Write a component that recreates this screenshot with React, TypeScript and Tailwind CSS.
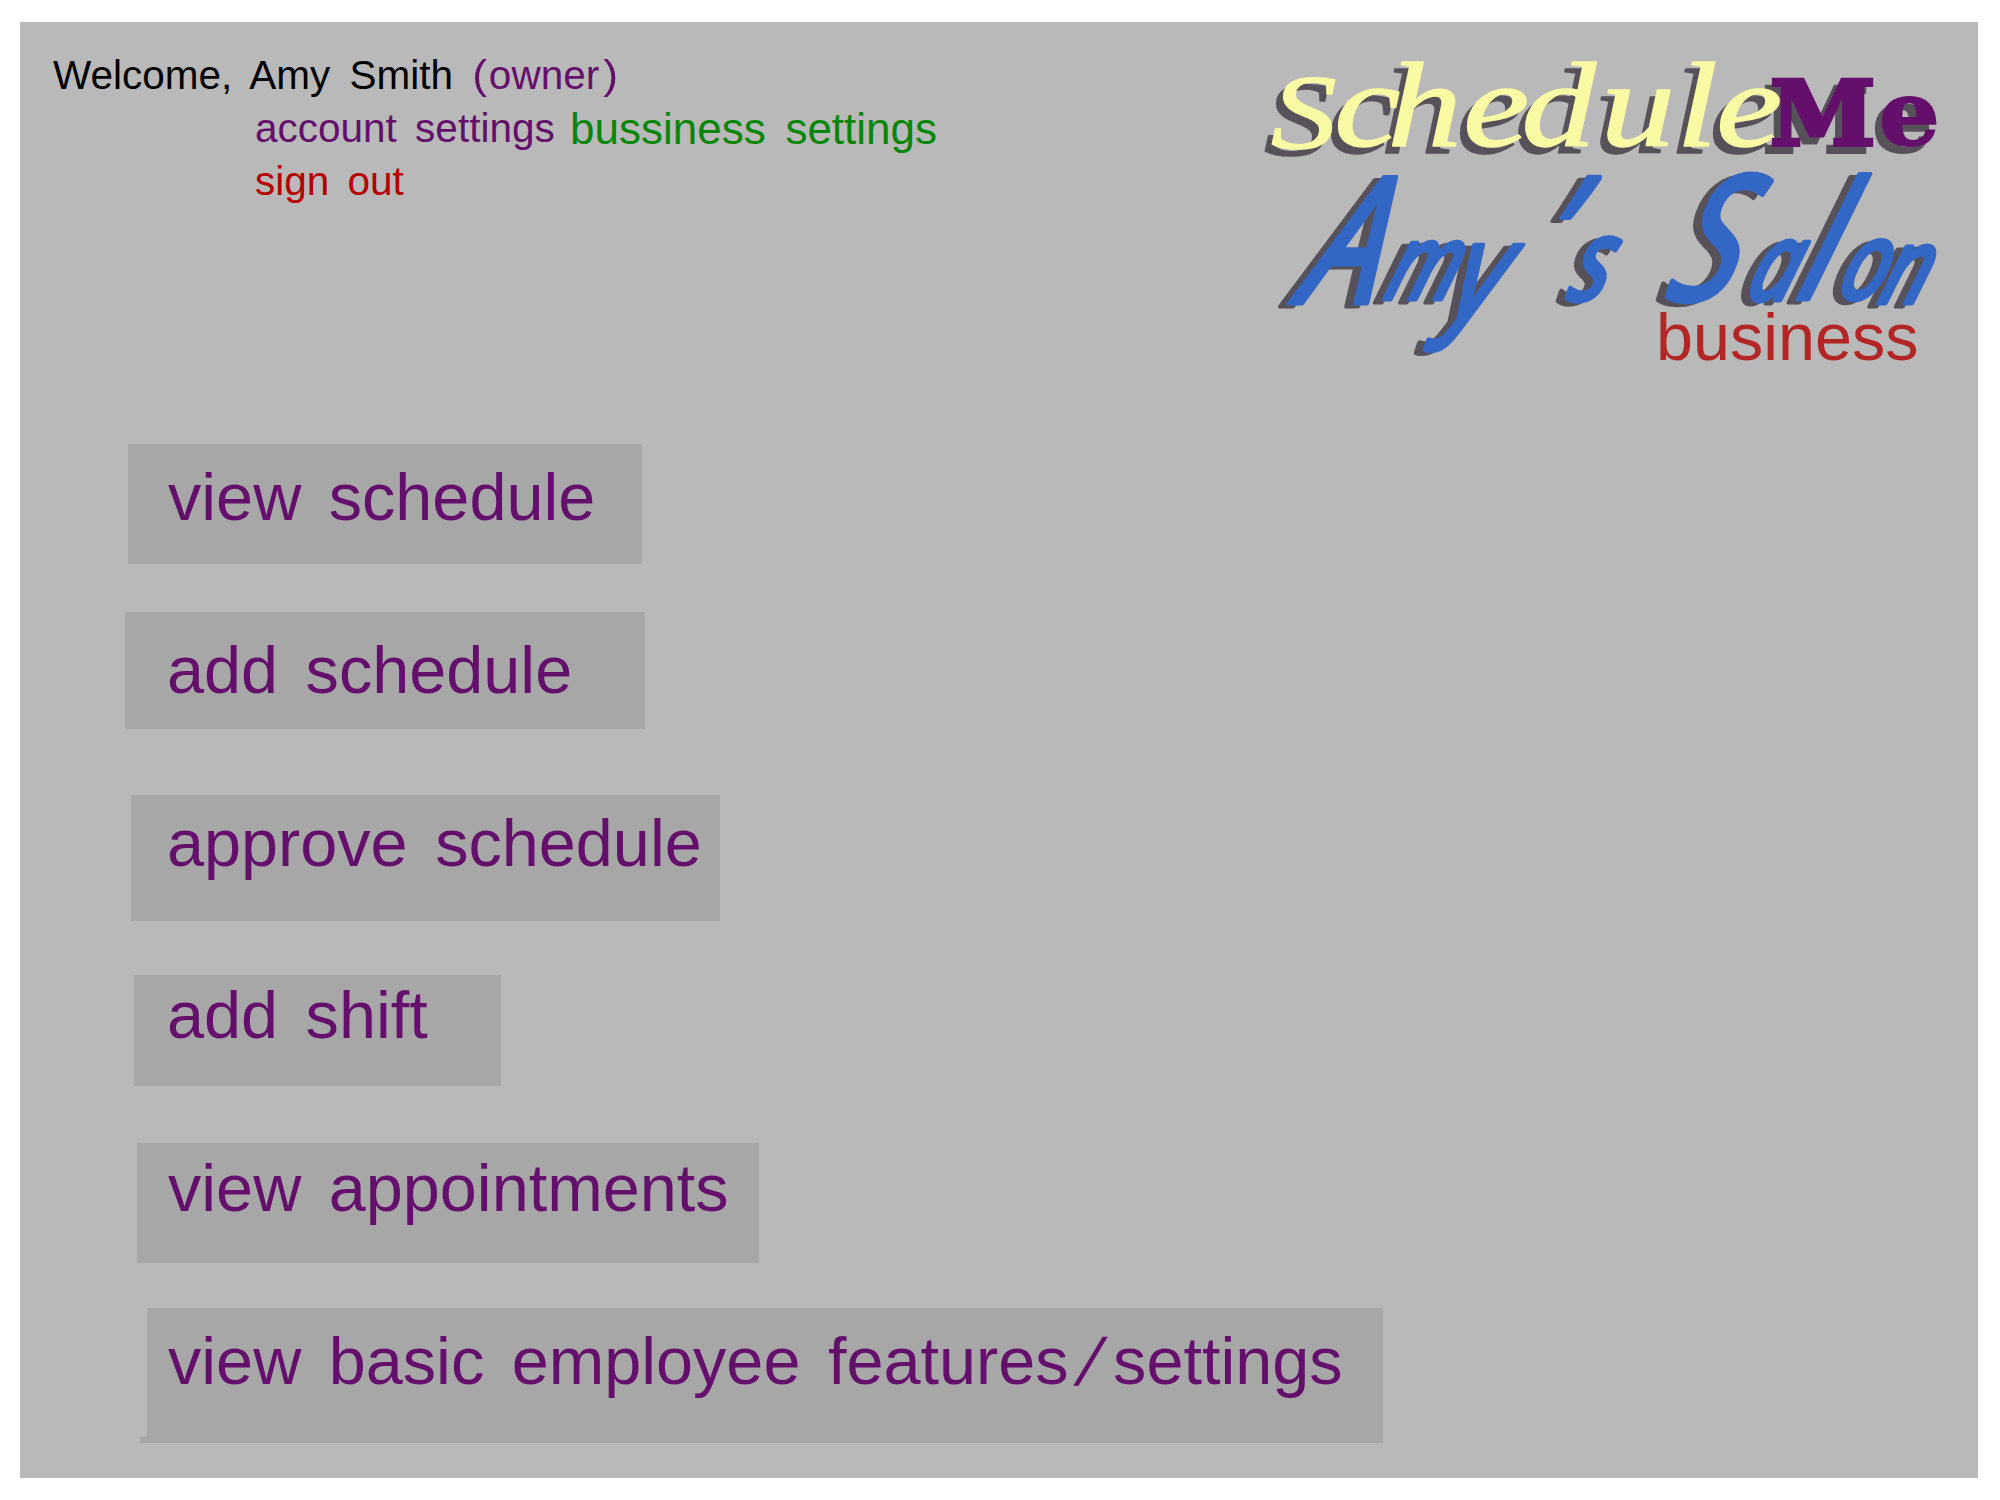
import React from "react";

type Item = { label: React.ReactNode; box: string };

const Slash = () => (
  <span className="ml-[12px] mr-[14px] inline-block origin-center translate-y-[1px] -skew-x-[18deg]">/</span>
);

const items: Item[] = [
  { label: "view schedule", box: "ml-[108px] mt-0 h-[120px] w-[514px] pl-[40px] pt-[13px]" },
  { label: "add schedule", box: "ml-[105px] mt-[48px] h-[117px] w-[520px] pl-[42px] pt-[18px]" },
  { label: "approve schedule", box: "ml-[111px] mt-[66px] h-[126px] w-[589px] pl-[36px] pt-[8px]" },
  { label: "add shift", box: "ml-[114px] mt-[54px] h-[111px] w-[367px] pl-[33px] pt-0" },
  { label: "view appointments", box: "ml-[117px] mt-[57px] h-[120px] w-[622px] pl-[31px] pt-[5px]" },
  {
    label: (
      <>
        view basic employee features
        <Slash />
        settings
      </>
    ),
    box: "relative ml-[127px] mt-[45px] h-[135px] w-[1236px] pl-[21px] pt-[13px]",
  },
];

function Account() {
  return (
    <div className="ml-[33px] mt-[27px] flex flex-col whitespace-nowrap text-[40.5px] leading-[53px] [word-spacing:8px]">
      <div className="flex">
        <span className="text-black">Welcome, Amy Smith&nbsp;</span>
        <span className="text-[#640f6c]">
          <span className="ml-[1px] mr-[2px] inline-block scale-x-110">(</span>owner
          <span className="ml-[5px] inline-block scale-x-110">)</span>
        </span>
      </div>
      <div className="ml-[202px] flex">
        <a className="w-[315px] text-[40.5px] text-[#640f6c] [word-spacing:7px]">account settings</a>
        <a className="text-[44px] text-[#068606] [word-spacing:7.5px]">bussiness settings</a>
      </div>
      <a className="ml-[202px] text-[#b40000] [word-spacing:7px]">sign out</a>
    </div>
  );
}

function Logo() {
  return (
    <svg
      className="mr-[18px] mt-[18px] h-[340px] w-[720px] shrink-0 overflow-visible"
      viewBox="1240 40 720 340"
    >
      <g className="[filter:drop-shadow(-7px_7px_0_#57525a)]">
        <text
          className="fill-[#fafaa5] stroke-[#fafaa5] font-['Liberation_Serif'] text-[120px] italic"
          strokeWidth="1.5"
          strokeLinejoin="round"
          transform="translate(1240 146) scale(1.24 1)"
          y="0"
        >
          <tspan x="25" y="2" fontSize="106">S</tspan>
          <tspan x="76 119 180 227 291 352 384" y="0">chedule</tspan>
        </text>
        <text
          className="fill-[#640f6c] stroke-[#640f6c] font-['DejaVu_Serif'] text-[90px] font-bold"
          transform="translate(1771 145) scale(1.06 1)"
          y="0"
        >
          <tspan x="-1" strokeWidth="4">M</tspan>
          <tspan x="102" strokeWidth="2">e</tspan>
        </text>
      </g>
      <g className="[filter:drop-shadow(-9px_3px_0_#57525a)]">
        <text
          className="fill-[#3367c5] stroke-[#3367c5] font-['Noto_Sans'] text-[104px] italic"
          strokeWidth="5"
          strokeLinejoin="round"
          strokeLinecap="round"
          transform="translate(1240 303) skewX(-18) scale(.78 1)"
          y="0"
        >
          <tspan x="73" fontSize="176">A</tspan>
          <tspan x="180" y="-4">m</tspan>
          <tspan x="269" y="15" fontSize="136">y</tspan>
          <tspan x="367" y="-8" fontSize="165">’</tspan>
          <tspan x="416" y="-3" fontSize="114">s</tspan>
          <tspan> </tspan>
          <tspan x="541" fontSize="174" y="-3">S</tspan>
          <tspan x="645" y="-3" fontSize="108">a</tspan>
          <tspan x="709" fontSize="164" y="-4">l</tspan>
          <tspan x="761" y="-4" fontSize="108">o</tspan>
          <tspan x="816" y="0">n</tspan>
        </text>
      </g>
      <text className="fill-[#b42626] font-['Liberation_Sans'] text-[66.5px]" x="1656" y="360">
        business
      </text>
    </svg>
  );
}

export default function App() {
  return (
    <div className="h-[1500px] w-[2000px] bg-white pl-[20px] pt-[22px] font-['Liberation_Sans',sans-serif]">
      <main className="h-[1456px] w-[1958px] bg-[#b9b9b9]">
        <header className="flex h-[422px] items-start justify-between">
          <Account />
          <Logo />
        </header>
        <nav className="flex flex-col items-start whitespace-nowrap text-[66.6px] leading-[80px] text-[#640f6c] [word-spacing:9px]">
          {items.map((item, i) => (
            <a key={i} className={`block bg-[#a7a7a7] ${item.box}`}>
              {item.label}
              {i === items.length - 1 && (
                <span className="absolute -left-[7px] bottom-0 h-[6px] w-[7px] bg-[#a7a7a7]" />
              )}
            </a>
          ))}
        </nav>
      </main>
    </div>
  );
}
